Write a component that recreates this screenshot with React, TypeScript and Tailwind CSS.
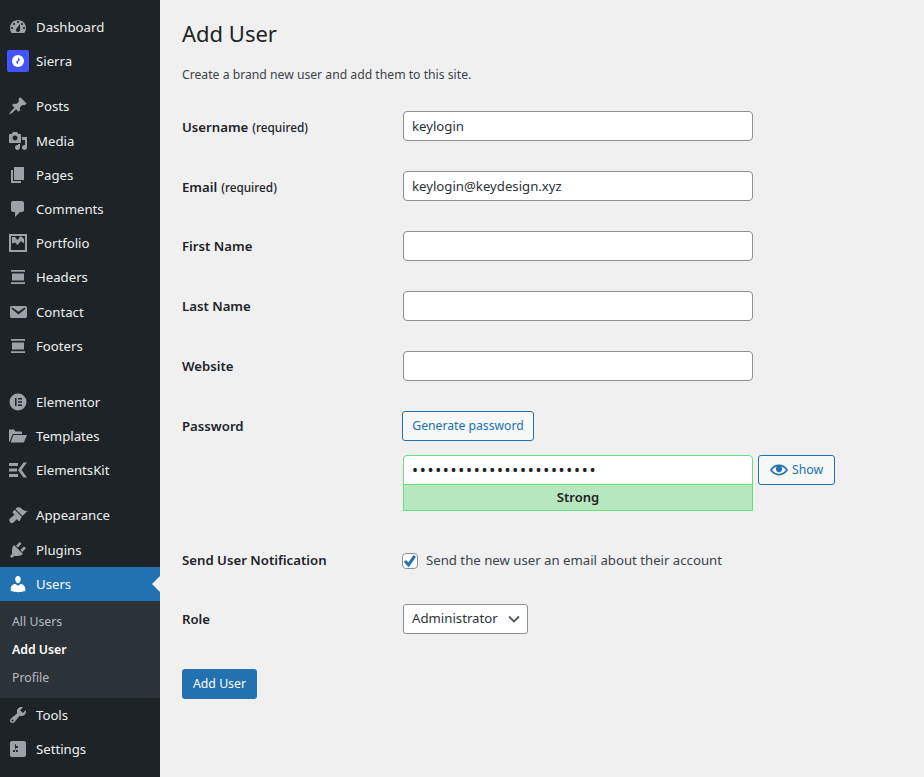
import React from "react";

const dashicons: Record<string, string> = {
  dashboard:
    "M3.76 16h12.48c1.1-1.37 1.76-3.11 1.76-5 0-4.42-3.58-8-8-8s-8 3.58-8 8c0 1.89.66 3.63 1.76 5zM10 4c.55 0 1 .45 1 1s-.45 1-1 1-1-.45-1-1 .45-1 1-1zM6 6c.55 0 1 .45 1 1s-.45 1-1 1-1-.45-1-1 .45-1 1-1zm8 0c.55 0 1 .45 1 1s-.45 1-1 1-1-.45-1-1 .45-1 1-1zm-5.37 5.55L12 7v6c0 1.1-.9 2-2 2s-2-.9-2-2c0-.57.24-1.08.63-1.45zM4 10c.55 0 1 .45 1 1s-.45 1-1 1-1-.45-1-1 .45-1 1-1zm12 0c.55 0 1 .45 1 1s-.45 1-1 1-1-.45-1-1 .45-1 1-1z",
  posts:
    "M10.44 3.02l1.82-1.82 6.36 6.35-1.83 1.82c-1.05-.68-2.48-.57-3.41.36l-.75.75c-.92.93-1.04 2.35-.35 3.41l-1.83 1.82-2.41-2.41-2.8 2.79c-.42.42-3.38 2.71-3.8 2.29s1.86-3.39 2.28-3.81l2.79-2.79L4.1 9.36l1.83-1.82c1.05.69 2.48.57 3.4-.36l.75-.75c.93-.92 1.05-2.35.36-3.41z",
  media:
    "M13 11V4c0-.55-.45-1-1-1h-1.67L9 1H5L3.67 3H2c-.55 0-1 .45-1 1v7c0 .55.45 1 1 1h10c.55 0 1-.45 1-1zM7 4.5c1.38 0 2.5 1.12 2.5 2.5S8.38 9.5 7 9.5 4.5 8.38 4.5 7 5.62 4.5 7 4.5zM14 6h5v10.5c0 1.38-1.12 2.5-2.5 2.5S14 17.88 14 16.5s1.12-2.5 2.5-2.5c.17 0 .34.02.5.05V9h-3V6zm-4 8.05V13h2v3.5c0 1.38-1.12 2.5-2.5 2.5S7 17.88 7 16.5 8.12 14 9.5 14c.17 0 .34.02.5.05z",
  pages: "M6 15V2h10v13H6zm-1 1h8v2H3V5h2v11z",
  comments:
    "M5 2h9c1.1 0 2 .9 2 2v7c0 1.1-.9 2-2 2h-2l-5 5v-5H5c-1.1 0-2-.9-2-2V4c0-1.1.9-2 2-2z",
  portfolio:
    "M1 1h18v18H1V1zm2 2v14h14V3H3zm1 7.5V4h3l2.5 3L12 3.5h1.5L16 6v4.5L13 8l-3.5 4L7 9.5l-3 1z",
  header: "M3 3h14v1.7H3V3zm1 3.5h12v7H4v-7zM3 15.3h14V17H3v-1.7z",
  email:
    "M3.87 4h13.25C18.37 4 19 4.59 19 5.79v8.42c0 1.19-.63 1.79-1.88 1.79H3.87c-1.25 0-1.88-.6-1.88-1.79V5.79c0-1.2.63-1.79 1.88-1.79zm6.62 8.6l6.74-5.53c.24-.2.43-.66.13-1.07-.29-.41-.82-.42-1.17-.17l-5.7 3.86L4.8 5.83c-.35-.25-.88-.24-1.17.17-.3.41-.11.87.13 1.07z",
  elementor:
    "M10 1.5a8.5 8.5 0 1 0 0 17 8.5 8.5 0 0 0 0-17zM7 6h1.5v8H7V6zm3 0h4v1.5h-4V6zm0 3.25h4v1.5h-4v-1.5zm0 3.25h4V14h-4v-1.5z",
  templates:
    "M1 15.5V4.5C1 4 1.4 3.5 2 3.5h4l1.5 2H13c.6 0 1 .4 1 1V8H5.5c-.6 0-1 .3-1.2.8L1.8 15.5H1zm1.6 1L5.2 9.5c.1-.3.3-.5.6-.5H19l-3 7c-.1.3-.4.5-.7.5H2.6z",
  elementskit:
    "M1 3h9v3H1V3zm0 5.5h8v3H1v-3zM1 14h9v3H1v-3zM15.5 2.5H19L13.5 10l5.5 7.5h-3.5L10 10l5.5-7.5z",
  appearance:
    "M14.48 11.06L7.41 3.99l1.5-1.5c.5-.56 2.3-.47 3.51.32 1.21.8 1.43 1.28 2.91 2.1 1.18.64 2.45 1.26 4.45.85zm-.71.71L6.7 4.7 4.93 6.47c-.39.39-.39 1.02 0 1.41l1.06 1.06c.39.39.39 1.03 0 1.42-.6.6-1.43 1.11-2.21 1.69-.35.26-.7.53-1.01.84C1.43 13.71.96 14.56 1.39 15.99c.45 1.45 1.6 2.4 3.1 2.01 1.28-.33 2.1-1.25 2.7-2.2.2-.32.44-.75.77-1.08.39-.39 1.03-.39 1.42 0l1.04 1.05c.39.39 1.02.39 1.41 0z",
  plugins:
    "M13.11 4.36L9.87 7.6 8 5.73l3.24-3.24c.35-.34 1.05-.2 1.56.32.52.51.66 1.21.31 1.55zm-8 1.77l.91-1.12 9.01 9.01-1.19.84c-.71.71-2.63 1.16-3.82 1.16H6.14L4.9 17.26c-.59.59-1.54.59-2.12 0-.59-.58-.59-1.53 0-2.12l1.24-1.24v-3.88c0-1.13.4-3.19 1.09-3.89zm7.26 3.97l3.24-3.24c.34-.35 1.04-.21 1.55.31.52.51.66 1.21.31 1.55l-3.24 3.25z",
  users:
    "M10 9.25c-2.27 0-2.73-3.44-2.73-3.44C7 4.02 7.82 2 9.97 2c2.16 0 2.98 2.02 2.71 3.81 0 0-.41 3.44-2.68 3.44zm0 2.57L12.72 10c2.39 0 4.52 2.33 4.52 4.53v2.49s-3.65 1.13-7.24 1.13c-3.65 0-7.24-1.13-7.24-1.13v-2.49c0-2.25 1.94-4.48 4.47-4.48z",
  tools:
    "M16.68 9.77c-1.34 1.34-3.3 1.67-4.95.99l-5.41 6.52c-.99.99-2.59.99-3.58 0s-.99-2.59 0-3.57l6.52-5.42c-.68-1.65-.35-3.61.99-4.95 1.28-1.28 3.12-1.62 4.72-1.06l-2.89 2.89 2.82 2.82 2.86-2.87c.53 1.58.18 3.39-1.08 4.65zM3.81 16.21c.4.39 1.04.39 1.43 0 .4-.4.4-1.04 0-1.43-.39-.4-1.03-.4-1.43 0-.39.39-.39 1.03 0 1.43z",
  settings:
    "M18 16V4c0-1.1-.9-2-2-2H4c-1.1 0-2 .9-2 2v12c0 1.1.9 2 2 2h12c1.1 0 2-.9 2-2zM8 11h1c.55 0 1 .45 1 1s-.45 1-1 1H8v1.5c0 .28-.22.5-.5.5s-.5-.22-.5-.5V13H6c-.55 0-1-.45-1-1s.45-1 1-1h1V5.5c0-.28.22-.5.5-.5s.5.22.5.5V7h1c.55 0 1 .45 1 1s-.45 1-1 1h-1v5.5c0 .28-.22.5-.5.5s-.5-.22-.5-.5V9z",
  eye: "M19.7 9.4C17.7 6 14 3.9 10 3.9S2.3 6 .3 9.4L0 10l.3.6c2 3.4 5.7 5.5 9.7 5.5s7.7-2.1 9.7-5.5l.3-.6-.3-.6zM10 14.1c-3.1 0-6-1.6-7.7-4.1C3.6 8 5.7 6.6 8 6.1c-.9.6-1.5 1.7-1.5 2.9 0 1.9 1.6 3.5 3.5 3.5s3.5-1.6 3.5-3.5c0-1.2-.6-2.3-1.5-2.9 2.3.5 4.4 1.9 5.7 3.9-1.7 2.5-4.6 4.1-7.7 4.1z",
};

function Dashicon({ name, className }: { name: string; className: string }) {
  return (
    <svg viewBox="0 0 20 20" className={className} fill="currentColor" fillRule="evenodd">
      <path d={dashicons[name]} />
    </svg>
  );
}

function MenuItem({ icon, label, active }: { icon: string; label: string; active?: boolean }) {
  return (
    <div className={`relative flex h-[34.2px] items-center ${active ? "bg-[#2271b1] text-white" : "text-[#f0f0f1]"}`}>
      <div className={`flex w-9 shrink-0 justify-center ${active ? "text-white" : "text-[#9ca2a7]"}`}>
        <Dashicon name={icon} className="size-5" />
      </div>
      <span>{label}</span>
      {active && (
        <span className="absolute right-0 top-[9px] h-0 w-0 border-y-[8px] border-r-[8px] border-y-transparent border-r-[#f0f0f1]" />
      )}
    </div>
  );
}

function SierraItem() {
  return (
    <div className="flex h-[34.2px] items-center text-[#f0f0f1]">
      <div className="flex w-9 shrink-0 justify-center">
        <div className="flex size-[22px] items-center justify-center rounded-[2px] bg-[#4353ff]">
          <svg viewBox="0 0 12 12" className="size-3">
            <circle cx="6" cy="6" r="6" fill="#fff" />
            <path d="M6 2.6l2.3 2.7L6 6.4zM6 9.4L3.7 6.7 6 5.6z" fill="#4353ff" />
          </svg>
        </div>
      </div>
      <span>Sierra</span>
    </div>
  );
}

function Sidebar() {
  return (
    <aside className="w-40 shrink-0 bg-[#1d2327] pt-[10px] text-[13.2px] leading-[18px]">
      <MenuItem icon="dashboard" label="Dashboard" />
      <SierraItem />
      <div className="h-[10.95px]" />
      <MenuItem icon="posts" label="Posts" />
      <MenuItem icon="media" label="Media" />
      <MenuItem icon="pages" label="Pages" />
      <MenuItem icon="comments" label="Comments" />
      <MenuItem icon="portfolio" label="Portfolio" />
      <MenuItem icon="header" label="Headers" />
      <MenuItem icon="email" label="Contact" />
      <MenuItem icon="header" label="Footers" />
      <div className="h-[21.8px]" />
      <MenuItem icon="elementor" label="Elementor" />
      <MenuItem icon="templates" label="Templates" />
      <MenuItem icon="elementskit" label="ElementsKit" />
      <div className="h-[11.2px]" />
      <MenuItem icon="appearance" label="Appearance" />
      <MenuItem icon="plugins" label="Plugins" />
      <MenuItem icon="users" label="Users" active />
      <div className="bg-[#2c3338] pt-[7.4px] pb-[5.7px] text-[12.3px] text-[#f0f6fc]/70">
        <div className="flex h-7 items-center pl-3">All Users</div>
        <div className="flex h-7 items-center pl-3 font-semibold text-white">Add User</div>
        <div className="flex h-7 items-center pl-3">Profile</div>
      </div>
      <MenuItem icon="tools" label="Tools" />
      <MenuItem icon="settings" label="Settings" />
    </aside>
  );
}

function Label({ children, note }: { children: React.ReactNode; note?: string }) {
  return (
    <div className={`w-[221px] shrink-0 font-semibold text-[#1d2327] ${note ? "mt-[4px]" : "mt-[2px]"}`}>
      {children}
      {note && <span className="ml-1 text-[11.8px] font-medium">{note}</span>}
    </div>
  );
}

function TextRow({ label, note, value }: { label: string; note?: string; value?: string }) {
  return (
    <div className="mb-[30px] flex h-[30px] items-center">
      <Label note={note}>{label}</Label>
      <input
        readOnly
        value={value ?? ""}
        className="h-[30px] w-[350px] rounded-[4px] border border-[#8c8f94] bg-white px-2 text-[#2c3338] outline-none"
      />
    </div>
  );
}

export default function App() {
  return (
    <div className="flex min-h-screen bg-[#f0f0f1] font-['Noto_Sans',sans-serif] text-[13.2px] text-[#3c434a]">
      <Sidebar />
      <main className="flex-1 pl-[22px]">
        <h1 className="pt-[18px] text-[22px] leading-[30px] text-[#1d2327]">Add User</h1>
        <p className="mt-[18px] mb-[27px] text-[12.2px] leading-[18px]">Create a brand new user and add them to this site.</p>

        <TextRow label="Username" note="(required)" value="keylogin" />
        <TextRow label="Email" note="(required)" value="keylogin@keydesign.xyz" />
        <TextRow label="First Name" />
        <TextRow label="Last Name" />
        <TextRow label="Website" />

        <div className="flex">
          <div className="flex h-[30px] items-center">
            <Label>Password</Label>
          </div>
          <div className="-ml-px">
            <button className="h-[30px] w-[132px] rounded-[3px] border border-[#2271b1] bg-[#f6f7f7] text-[12.2px] text-[#2271b1]">
              Generate password
            </button>
            <div className="mt-[14px] ml-px flex items-start gap-[5px]">
              <div className="w-[350px]">
                <div className="flex h-[30px] items-center rounded-t-[4px] border border-[#68de7c] bg-white px-2 text-[#1d2327]">
                  <span className="text-[16px] tracking-[1.7px]">••••••••••••••••••••••••</span>
                </div>
                <div className="-mt-px flex h-[27px] items-center justify-center border border-[#68de7c] bg-[#b8e6bf] text-[13px] font-semibold text-[#1d2327]">
                  Strong
                </div>
              </div>
              <button className="flex h-[30px] w-[77px] items-center justify-center gap-1 rounded-[3px] border border-[#2271b1] bg-[#f6f7f7] text-[12.3px] text-[#2271b1]">
                <Dashicon name="eye" className="size-[18px]" />
                Show
              </button>
            </div>
          </div>
        </div>

        <div className="mt-[40px] flex h-[20px] items-center">
          <div className="w-[221px] shrink-0 font-semibold text-[#1d2327]">Send User Notification</div>
          <div className="-ml-px flex items-center gap-2">
            <span className="flex size-4 items-center justify-center rounded-[4px] border border-[#8c8f94] bg-white">
              <svg viewBox="0 0 16 16" className="size-[18px] shrink-0 text-[#2271b1]" fill="none" stroke="currentColor" strokeWidth="2.6">
                <path d="M3.5 8l3.2 3.4 5.5-8" />
              </svg>
            </span>
            <span>Send the new user an email about their account</span>
          </div>
        </div>

        <div className="mt-[33px] flex h-[30px] items-center">
          <div className="mt-[2px] w-[221px] shrink-0 font-semibold text-[#1d2327]">Role</div>
          <div className="flex h-[30px] w-[125px] items-center justify-between rounded-[3px] border border-[#8c8f94] bg-white pl-2 pr-[7px] text-[#2c3338]">
            <span>Administrator</span>
            <svg viewBox="0 0 12 12" className="size-3" fill="none" stroke="#50575e" strokeWidth="1.8">
              <path d="M1 3.5l5 5 5-5" />
            </svg>
          </div>
        </div>

        <button className="mt-[35px] h-[30px] w-[75px] rounded-[3px] bg-[#2271b1] pt-px text-[12.3px] text-white">Add User</button>
      </main>
    </div>
  );
}
